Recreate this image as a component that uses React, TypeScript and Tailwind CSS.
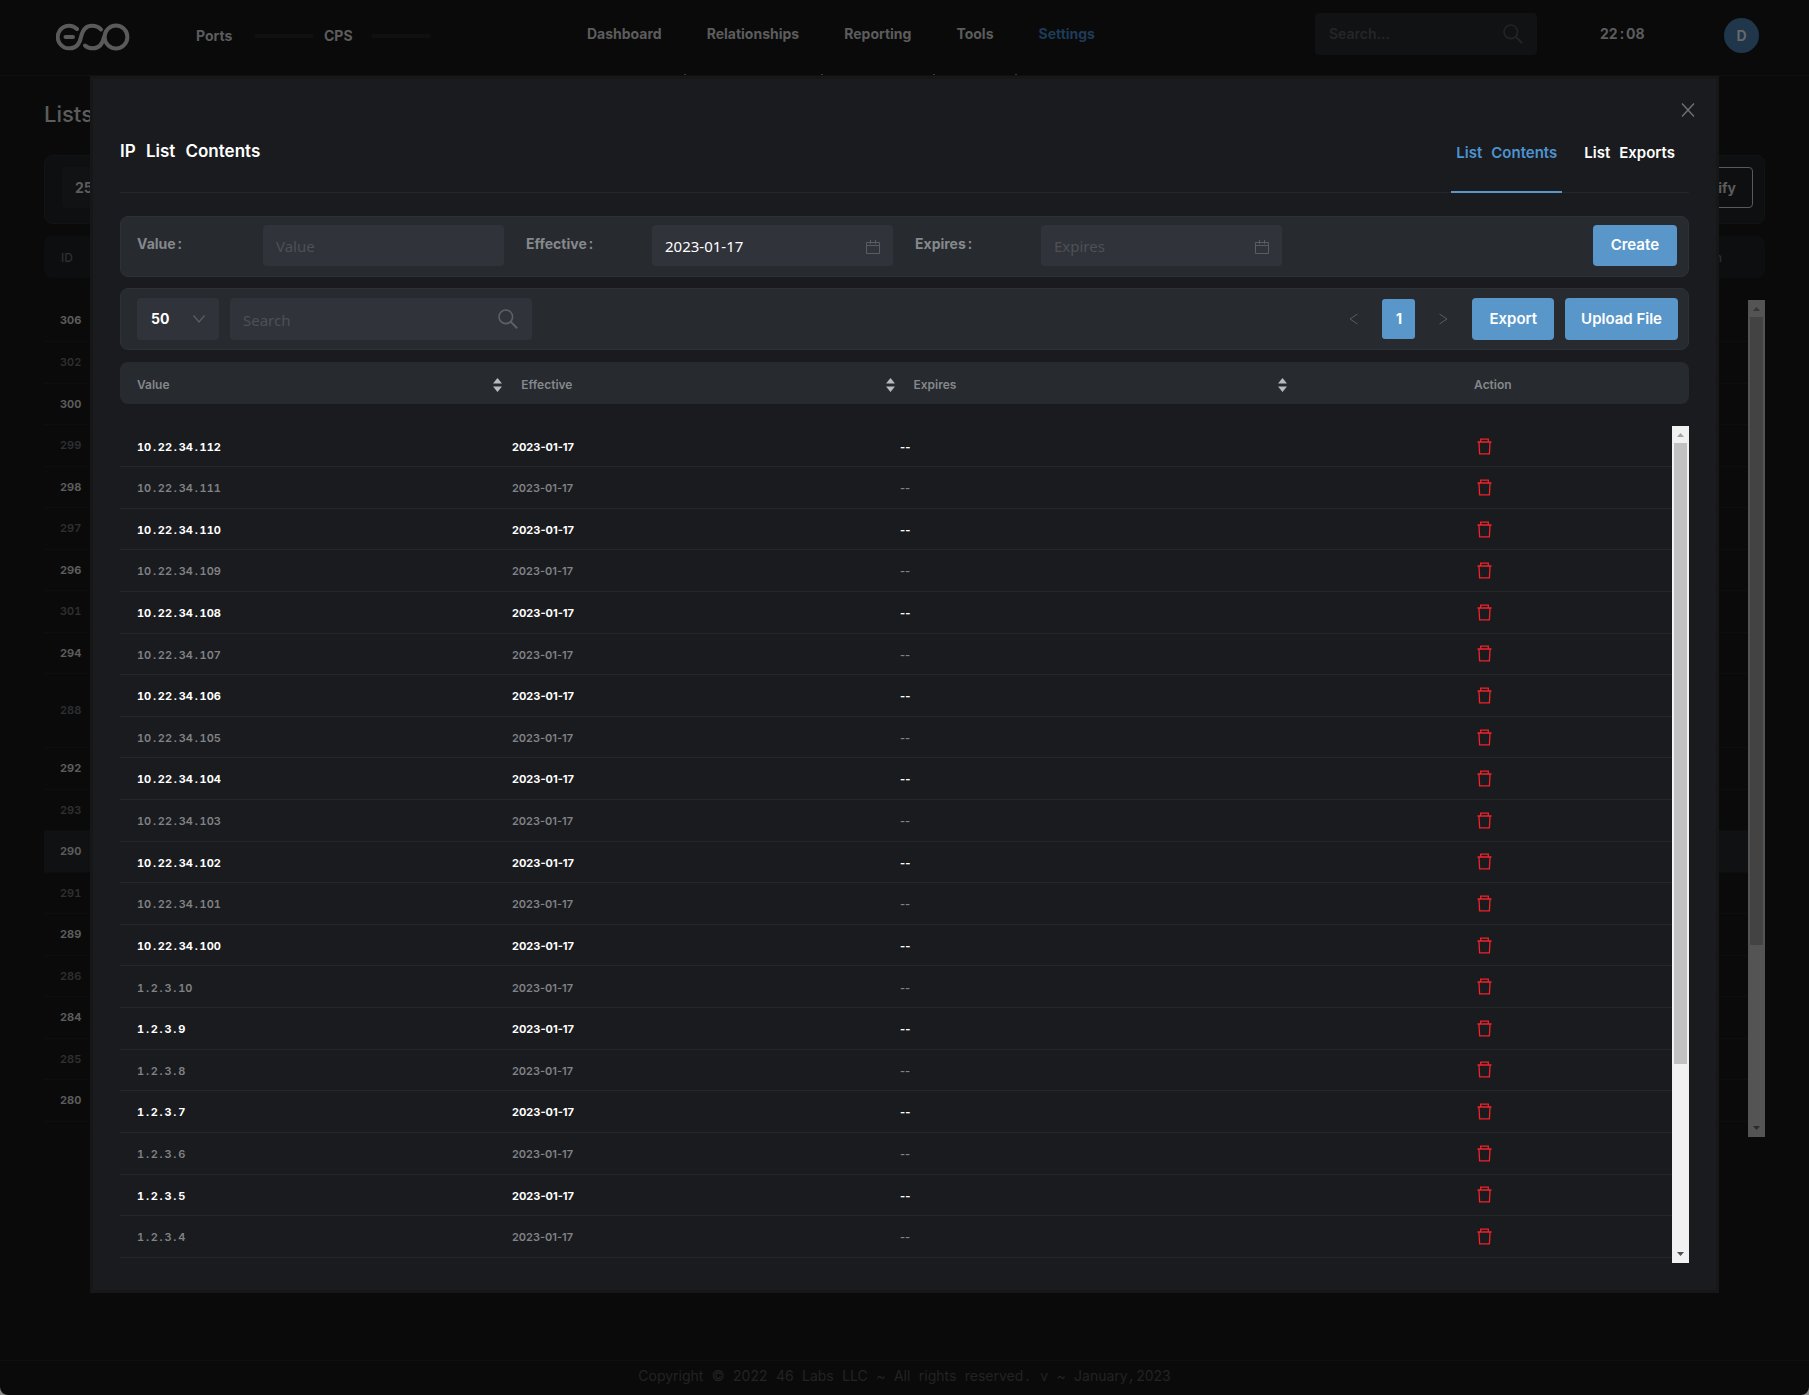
import React from 'react'

const NAV_ITEMS = ['Dashboard', 'Relationships', 'Reporting', 'Tools', 'Settings']

const LIST_IDS = [306, 302, 300, 299, 298, 297, 296, 301, 294, 288, 292, 293, 290, 291, 289, 286, 284, 285, 280]
const SELECTED_ID = 290

const ROWS = [
  '10.22.34.112', '10.22.34.111', '10.22.34.110', '10.22.34.109', '10.22.34.108',
  '10.22.34.107', '10.22.34.106', '10.22.34.105', '10.22.34.104', '10.22.34.103',
  '10.22.34.102', '10.22.34.101', '10.22.34.100', '1.2.3.10', '1.2.3.9',
  '1.2.3.8', '1.2.3.7', '1.2.3.6', '1.2.3.5', '1.2.3.4'
].map((value) => ({ value, effective: '2023-01-17', expires: '--' }))

// Spaces and punctuation are set in the monospace face
function Mixed({ text }: { text: string }) {
  return (
    <>
      {text.split(/([ .:,]+)/).map((part, i) =>
        i % 2 ? (
          <span key={i} className="font-['Liberation_Mono',monospace] whitespace-pre">{part}</span>
        ) : (
          part
        )
      )}
    </>
  )
}

function Logo() {
  return (
    <svg width="74" height="30" viewBox="0 0 74 30" fill="none" stroke="#5a5a5a" strokeWidth="4" strokeLinecap="round">
      <path d="M21 7A11.300 11.300 0 1 0 14 26.300C20 26.300 23.500 22 25 15C26.500 8 30 3.700 36 3.700C40 3.700 43 5 45 7.500" />
      <path d="M9.500 15H17" />
      <path d="M29 23.500C31 25.500 33.500 26.300 37 26.300C43 26.300 46.500 22 48 15" />
      <circle cx="60" cy="15" r="11.400" />
    </svg>
  )
}

function SearchIcon({ className }: { className: string }) {
  return (
    <svg width="20" height="20" viewBox="0 0 20 20" fill="none" stroke="currentColor" strokeWidth="1.6" className={className}>
      <circle cx="7.800" cy="7.800" r="6.800" />
      <path d="M12.600 12.600L19.200 19.200" strokeWidth="2" />
    </svg>
  )
}

function CalendarIcon() {
  return (
    <svg width="14" height="14" viewBox="0 0 14 14" fill="none" stroke="#5b5c60" className="mt-0.5 shrink-0">
      <path d="M0.500 2.500H13.500V13.500H0.500ZM0.500 5.500H13.500M4.500 0V4M9.500 0V4" />
    </svg>
  )
}

function TrashIcon() {
  return (
    <svg width="15" height="17" viewBox="0 0 15 17" fill="none" stroke="#f0232b" strokeWidth="1.3">
      <path d="M0.500 4H14.500M3.700 4V1.200H11.300V4M2 4.500L2.600 15.900H12.400L13 4.500" />
    </svg>
  )
}

function SortIcon() {
  return (
    <svg width="9" height="14" viewBox="0 0 9 14" fill="#b9babb">
      <path d="M0 5.500L4.500 0L9 5.500ZM0 8.500L4.500 14L9 8.500Z" />
    </svg>
  )
}

function ScrollTrack({ dim }: { dim?: boolean }) {
  const arrow = dim ? 'fill-[#2b2b2b]' : 'fill-[#505050]'
  return (
    <div className={`flex h-[837px] w-[17px] shrink-0 flex-col items-center ${dim ? 'bg-[#545454]' : 'bg-[#f1f1f1]'}`}>
      <svg width="17" height="17" viewBox="0 0 17 17" className={dim ? 'fill-[#363636]' : 'fill-[#a3a3a3]'}>
        <path d="M5 11L8.500 7L12 11Z" />
      </svg>
      <div className={`w-[13px] ${dim ? 'h-[628px] bg-[#434343]' : 'h-[621px] bg-[#c1c1c1]'}`} />
      <svg width="17" height="17" viewBox="0 0 17 17" className={`mt-auto ${arrow}`}>
        <path d="M5 6L8.500 10L12 6Z" />
      </svg>
    </div>
  )
}

function Header() {
  return (
    <header className="flex h-[76px] items-start border-b border-[#0f1011] pr-[50px] pl-14 text-sm font-bold text-[#5c5c5c]">
      <div className="mt-[22px]">
        <Logo />
      </div>
      <div className="mt-[26px] ml-[66px] flex items-center">
        <span className="w-[58px]">Ports</span>
        <span className="h-1 w-[60px] rounded-full bg-[#0f1011]" />
        <span className="ml-[10px] w-[47px]">CPS</span>
        <span className="h-1 w-[60px] rounded-full bg-[#0f1011]" />
      </div>
      <nav className="ml-[156px] flex h-[75px] gap-[45px]">
        {NAV_ITEMS.map((item) => (
          <div key={item} className="relative pt-6">
            <a href="#" className={item === 'Settings' ? 'text-[#1e3b57]' : 'text-[#5c5c5c]'}>{item}</a>
            {item !== 'Settings' && <span className="absolute -right-6 bottom-0 h-px w-0.5 bg-[#3a3b3c]" />}
          </div>
        ))}
      </nav>
      <div className="ml-auto flex items-start">
        <div className="mt-[13px] flex h-[42px] w-[222px] items-center rounded bg-[#111214] px-[14px]">
          <input
            aria-label="Search"
            placeholder="Search..."
            className="w-full min-w-0 bg-transparent text-sm font-semibold outline-none placeholder:text-[#252627]"
          />
          <SearchIcon className="shrink-0 text-[#232424]" />
        </div>
        <span className="mt-6 ml-[63px] w-[124px]"><Mixed text="22:08" /></span>
        <button className="mt-[18px] h-[35px] w-[35px] rounded-full bg-[#1f364b] text-[#66686b]">D</button>
      </div>
    </header>
  )
}

function ListsPage() {
  return (
    <main className="px-11">
      <h1 className="mt-[22px] text-[22px] leading-8 font-medium text-[#5c5c5c]">Lists</h1>
      <div className="mt-[25px] flex h-[69px] items-start justify-between rounded-lg border border-[#111315] bg-[#0d0f10] pt-[11px] pr-[11px] pl-[17px] text-sm font-bold text-[#5c5c5c]">
        <button className="h-[41px] w-[82px] rounded bg-[#101214] pl-[13px] text-left">25</button>
        <button className="h-[41px] rounded border border-[#5a5a5a] px-4">Modify</button>
      </div>
      <div className="mt-3 flex h-[42px] items-center justify-between rounded-lg bg-[#0d0e0f] pt-0.5 pr-[43px] pl-[17px] text-xs font-medium text-[#2e3033]">
        <span>ID</span>
        <span>Action</span>
      </div>
      <div className="mt-[22px] flex items-start">
        <table className="h-[822px] flex-1 border-collapse text-[11px]">
          <tbody>
            {LIST_IDS.map((id, i) => (
              <tr
                key={id}
                className={`border-b border-[#0d0e0f] ${id === 288 ? 'h-[73px]' : 'h-[41px]'} ${id === SELECTED_ID ? 'bg-[#101112]' : ''} ${i % 2 ? 'font-semibold text-[#2e3031]' : 'font-bold text-[#5c5c5c]'}`}
              >
                <td className="pl-4 tabular-nums">{id}</td>
              </tr>
            ))}
          </tbody>
        </table>
        <ScrollTrack dim />
      </div>
    </main>
  )
}

function DateField({ id, label, value }: { id: string; label: string; value?: string }) {
  return (
    <div className="flex pr-[6px]">
      <label htmlFor={id} className="w-[126px] shrink-0 pt-[9px] text-sm font-bold text-[#85888c]">
        <Mixed text={label + ':'} />
      </label>
      <div className="flex h-[41px] min-w-0 flex-1 items-center rounded bg-[#31333b] pr-[13px] pl-[13px]">
        <input
          id={id}
          placeholder={label}
          defaultValue={value}
          className="w-full min-w-0 bg-transparent pt-0.5 font-['Noto_Sans',sans-serif] text-[15px] text-white outline-none placeholder:text-[#4e5054]"
        />
        {id !== 'value' && <CalendarIcon />}
      </div>
    </div>
  )
}

function ListContents() {
  return (
    <section role="dialog" aria-label="IP List Contents" className="absolute inset-x-[90px] top-[76px] border-[3px] border-[#171717] bg-[#1a1b1e] p-[27px]">
      <button aria-label="Close" className="absolute top-[22px] right-[19px] p-[2px] text-[#727375]">
        <svg width="14" height="14" viewBox="0 0 14 14" stroke="currentColor" strokeWidth="1.300">
          <path d="M1 0.500L13 13.500M13 0.500L1 13.500" />
        </svg>
      </button>

      {/* Title and tabs */}
      <div className="flex h-[87px] items-end justify-between border-b border-[#24262a]">
        <h2 className="pb-[27px] text-[17px] leading-6 font-semibold text-white"><Mixed text="IP List Contents" /></h2>
        <div className="-mb-px flex gap-[17px] pr-[9px] text-[15px] leading-5 font-semibold">
          <button className="border-b-2 border-[#5997ca] px-[5px] pb-[26px] text-[#4c93d2]"><Mixed text="List Contents" /></button>
          <button className="border-b-2 border-transparent px-[5px] pb-[26px] text-white"><Mixed text="List Exports" /></button>
        </div>
      </div>

      {/* New entry */}
      <form className="mt-[23px] grid h-[61px] grid-cols-4 gap-4 rounded-lg border border-[#2c3338] bg-[#272a2e] pt-2 pr-[11px] pl-4">
        <DateField id="value" label="Value" />
        <DateField id="effective" label="Effective" value="2023-01-17" />
        <DateField id="expires" label="Expires" />
        <button type="button" className="h-[41px] justify-self-end rounded bg-[#5997ca] px-[18px] text-[15px] font-semibold text-white">Create</button>
      </form>

      {/* Toolbar */}
      <div className="mt-[11px] flex h-[62px] items-center rounded-lg border border-[#2c3338] bg-[#272a2e] pr-[10px] pl-4">
        <div className="relative">
          <select aria-label="Page size" className="h-[42px] w-[82px] appearance-none rounded bg-[#31333b] pl-[14px] text-sm font-bold text-white outline-none">
            <option>50</option>
          </select>
          <svg width="12" height="8" viewBox="0 0 12 8" fill="none" stroke="#5b5c60" strokeWidth="1.300" className="pointer-events-none absolute top-[17px] right-[14px]">
            <path d="M0.500 0.500L6 7L11.500 0.500" />
          </svg>
        </div>
        <div className="ml-[11px] flex h-[42px] w-[302px] items-center rounded bg-[#31333b] pr-[14px] pl-[13px]">
          <input
            aria-label="Search values"
            placeholder="Search"
            className="w-full min-w-0 bg-transparent pt-0.5 font-['Noto_Sans',sans-serif] text-[15px] text-white outline-none placeholder:text-[#4e5054]"
          />
          <SearchIcon className="shrink-0 text-[#5f6063]" />
        </div>
        <div className="ml-auto flex items-center text-[15px] font-semibold text-white">
          <button aria-label="Previous page" className="text-[#5b5c60]">
            <svg width="9" height="12" viewBox="0 0 9 12" fill="none" stroke="currentColor"><path d="M8.500 1L1 6L8.500 11" /></svg>
          </button>
          <button className="ml-6 h-10 w-[33px] rounded-[3px] bg-[#5997ca] text-sm font-bold">1</button>
          <button aria-label="Next page" className="ml-6 text-[#5b5c60]">
            <svg width="9" height="12" viewBox="0 0 9 12" fill="none" stroke="currentColor"><path d="M0.500 1L8 6L0.500 11" /></svg>
          </button>
          <button className="ml-6 h-[42px] rounded bg-[#5997ca] px-[17px]">Export</button>
          <button className="ml-[11px] h-[42px] rounded bg-[#5997ca] px-4">Upload File</button>
        </div>
      </div>

      {/* Table head */}
      <table className="mt-3 w-full table-fixed text-xs">
        <thead>
          <tr className="h-[42px] text-left text-[#85888c]">
            {['Value', 'Effective', 'Expires'].map((col) => (
              <th key={col} className="bg-[#272a2e] pt-1 pr-[10px] pb-0 pl-[9px] font-semibold first:rounded-l-lg first:pl-[17px]">
                <div className="flex items-center justify-between">
                  {col}
                  <SortIcon />
                </div>
              </th>
            ))}
            <th className="rounded-r-lg bg-[#272a2e] pt-1 text-center font-semibold">Action</th>
          </tr>
        </thead>
      </table>

      <div className="mt-[22px] flex items-start">
        <table className="h-[832px] w-full min-w-0 table-fixed border-collapse text-[11px]">
          <tbody>
            {ROWS.map((row, i) => (
              <tr key={row.value} className={`border-b border-[#24262a] ${i % 2 ? 'font-semibold text-[#808286]' : 'font-bold text-white'}`}>
                <td className="pt-[3px] pl-[17px] tabular-nums"><Mixed text={row.value} /></td>
                <td className="px-1 pt-0.5">{row.effective}</td>
                <td className="px-1 pt-0.5">{row.expires}</td>
                <td className="pl-3">
                  <button aria-label={`Delete ${row.value}`} className="mx-auto block"><TrashIcon /></button>
                </td>
              </tr>
            ))}
          </tbody>
        </table>
        <ScrollTrack />
      </div>
    </section>
  )
}

export default function App() {
  return (
    <div className="bg-[#8a8a88]">
      <div className="relative flex min-h-screen flex-col rounded-b-lg bg-[#0a0a0b] font-['Inter',sans-serif]">
        <Header />
        <ListsPage />
        <footer className="mt-auto flex h-[35px] justify-center border-t border-[#0f0f10] pt-[5px] text-sm text-[#222324]">
          <p><Mixed text="Copyright © 2022 46 Labs LLC ~ All rights reserved. v ~ January,2023" /></p>
        </footer>
        <ListContents />
      </div>
    </div>
  )
}
